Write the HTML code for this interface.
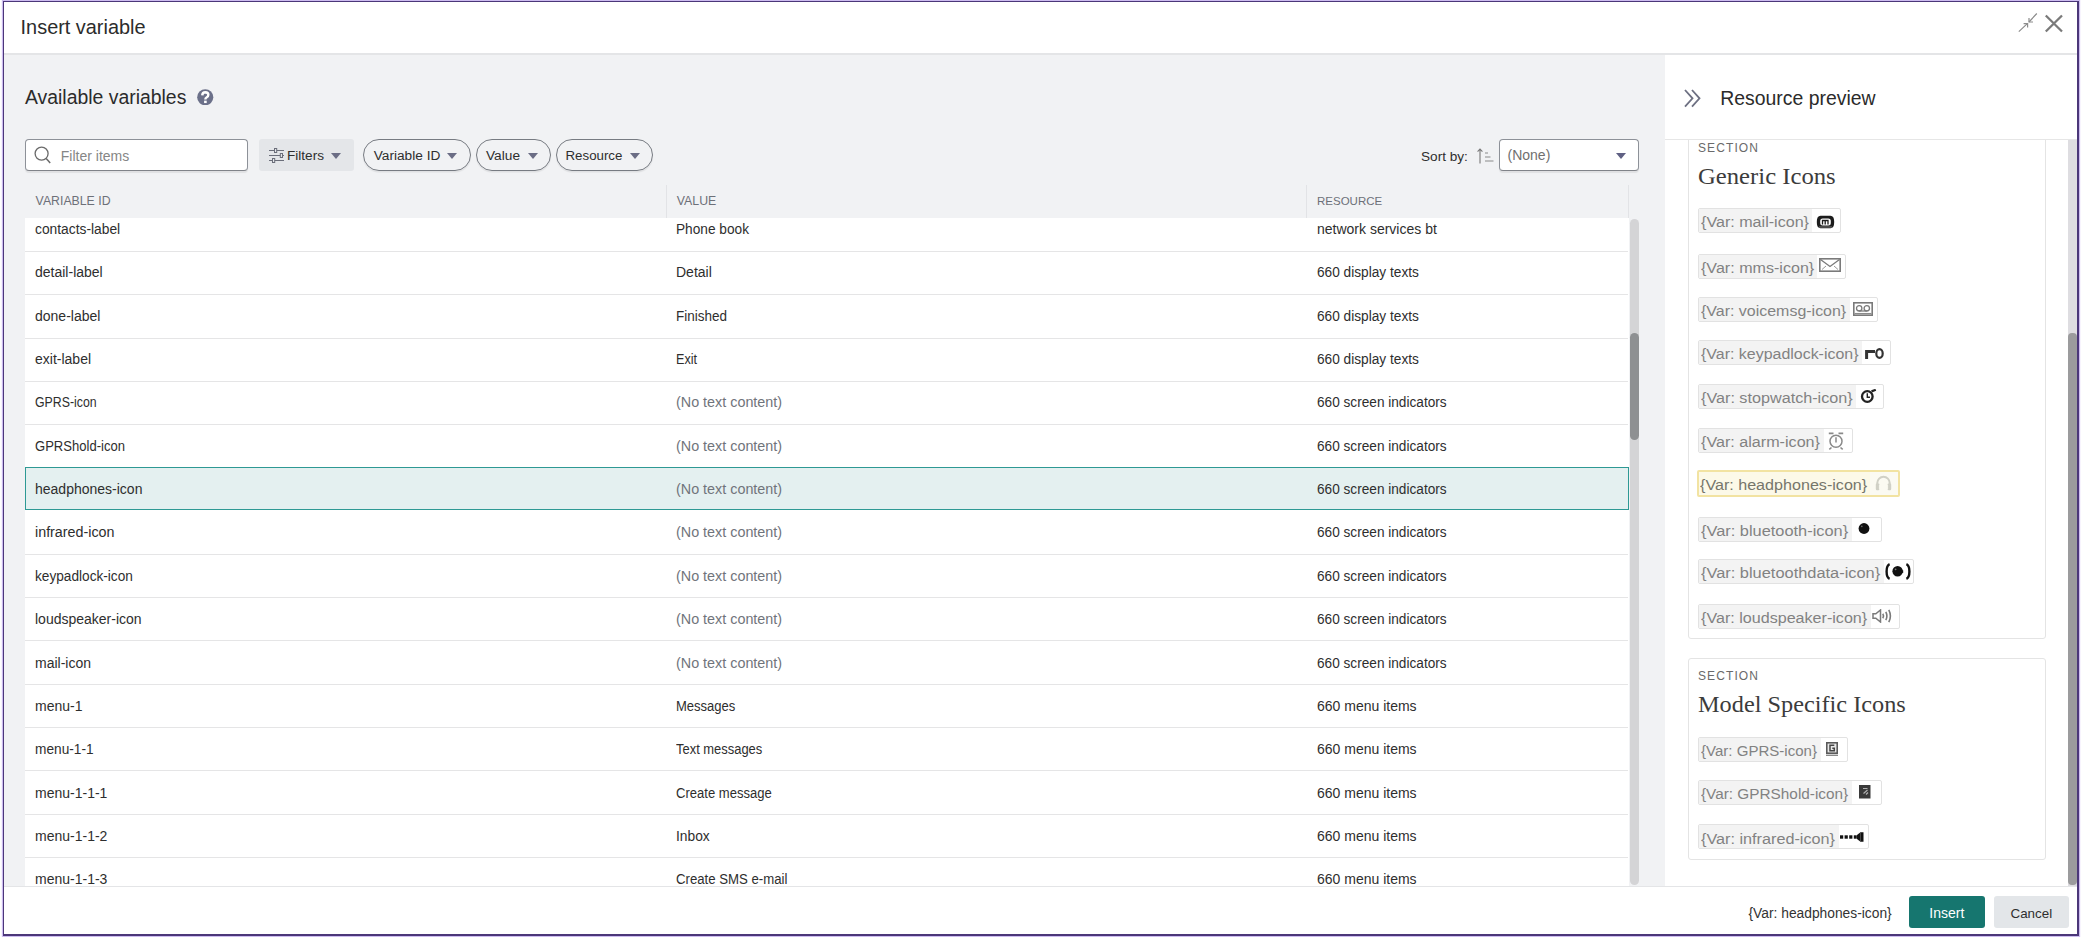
<!DOCTYPE html>
<html><head><meta charset="utf-8">
<style>
*{box-sizing:border-box;margin:0;padding:0}
html,body{width:2082px;height:937px;overflow:hidden;background:#fff;font-family:"Liberation Sans",sans-serif;color:#2b2b2b;position:relative}
.abs{position:absolute}
.txt{position:absolute;white-space:nowrap}
#frame{position:absolute;left:3px;top:1px;width:2076px;height:935px;border-style:solid;border-color:#4b3779;border-width:1.4px 2px 2px 1.4px;box-shadow:0 0 1px 1px #cdbcf0;z-index:50;pointer-events:none}
#hdrline{position:absolute;left:4px;top:53px;width:2073px;height:2px;background:#e4e5e7}
#left{position:absolute;left:4px;top:55px;width:1661px;height:831px;background:#f1f2f4}
#right{position:absolute;left:1665px;top:55px;width:412px;height:831px;background:#fff}
#foot{position:absolute;left:4px;top:886px;width:2073px;height:48px;background:#fff;border-top:1px solid #e4e5e7}
#tbody{position:absolute;left:25px;top:218px;width:1604px;height:668px;overflow:hidden;background:#fff}
.row{position:absolute;left:0;width:1603px;height:43.27px;background:#fff;border-bottom:1px solid #e5e5e6;font-size:14px;color:#2e2e2e}
.row span{position:absolute;top:12.5px;line-height:17px;white-space:nowrap;transform-origin:0 0}
.row .c1{left:10px}
.row .c2{left:651px}
.row .c3{left:1292px}
.row .g{color:#70747b}
.row.sel{background:#e4f0f0;border:1px solid #2e9994;z-index:2;width:1604px}
.row.sel span{top:12.1px}
.row.sel .c1{left:9px}.row.sel .c2{left:650px}.row.sel .c3{left:1291px}
.chip{position:absolute;border:1px solid #e2e2e2;border-radius:2px;background:#fff;overflow:hidden}
.chip .cbg{position:absolute;left:0;top:0;bottom:0;background:#f3f3f3}
.chip .ct{position:absolute;left:2px;font-size:15.5px;line-height:20px;color:#828282;white-space:nowrap;transform-origin:0 0}
.chip.hl{border:2px solid #f2e3a2;margin-left:-1px;background:#fbfaf2}
.chip.hl .cbg{background:#fcf9e8}
.chip.hl .ct{color:#76766b;left:1px}
.sec{position:absolute;left:1688px;width:358px;border:1px solid #e4e4e4;border-radius:3px;background:#fff}
.lab{position:absolute;font-size:12px;letter-spacing:1.1px;color:#6a6a6a;white-space:nowrap;line-height:15px}
.h{position:absolute;font-family:"Liberation Serif",serif;font-size:24.3px;line-height:28px;color:#3c3c3c;white-space:nowrap}
.pill{position:absolute;top:139px;height:32px;border:1px solid #777b82;border-radius:16px;box-shadow:0 1.5px 1px rgba(0,0,0,0.07)}
.tri{position:absolute;width:0;height:0;border-left:5.7px solid transparent;border-right:5.7px solid transparent;border-top:6.4px solid #6b6d85;margin-top:0.3px}
.t14{font-size:14px;line-height:17px;color:#2e2e2e}
</style></head>
<body>
<div id="frame"></div>
<!-- header -->
<div class="txt" style="left:20.6px;top:15.1px;font-size:19.9px;line-height:24px;color:#2c2c2c">Insert variable</div>
<svg class="abs" style="left:2018px;top:13px" width="20" height="20" viewBox="0 0 20 20"><path d="M0.8 18.6 L9.6 10.4 M18.8 0.5 L11 9" stroke="#8c8c8c" stroke-width="1.2" fill="none"/><path d="M5.6 10.6 H9.6 V14.4 M15 9 H11 V5" stroke="#8c8c8c" stroke-width="1.2" fill="none"/></svg>
<svg class="abs" style="left:2044px;top:13.5px" width="20" height="19" viewBox="0 0 20 19"><path d="M1.8 1.5 L18 17.5 M18 1.5 L1.8 17.5" stroke="#7a7a7a" stroke-width="2.3" fill="none"/></svg>
<div id="hdrline"></div>
<div id="left"></div>
<div id="right"></div>

<div class="txt" style="left:25px;top:85px;font-size:19.4px;line-height:24px;color:#2b2b2b">Available variables</div>
<svg class="abs" style="left:197px;top:88.6px" width="16.5" height="16.5" viewBox="0 0 17 17"><circle cx="8.5" cy="8.5" r="8.3" fill="#6b7089"/><path d="M5.4 6.6 Q5.5 3.3 8.6 3.3 Q11.7 3.4 11.7 6 Q11.7 7.8 9.8 8.8 Q8.6 9.4 8.6 10.8" stroke="#fff" stroke-width="2.5" fill="none"/><rect x="7.3" y="12" width="2.7" height="2.5" fill="#fff"/></svg>
<!-- search -->
<div class="abs" style="left:25px;top:139px;width:223px;height:32px;background:#fff;border:1px solid #8d9198;border-bottom-color:#808389;border-radius:4px;box-shadow:0 1.5px 1px rgba(0,0,0,0.07)"></div>
<svg class="abs" style="left:34px;top:146px" width="17" height="18" viewBox="0 0 17 18"><circle cx="7.6" cy="7.6" r="6.5" fill="none" stroke="#6a6a6a" stroke-width="1.3"/><path d="M12.2 12.5 L16.2 17" stroke="#6a6a6a" stroke-width="1.5"/></svg>
<div class="txt t14" style="left:60.8px;top:148px;color:#868686">Filter items</div>
<!-- filters btn -->
<div class="abs" style="left:259px;top:139px;width:95px;height:32px;background:#e4e6e9;border-radius:3px"></div>
<svg class="abs" style="left:269px;top:148px" width="15" height="16" viewBox="0 0 15 16"><path d="M0 2.5 H15 M0 7.5 H15 M0 12.5 H15" stroke="#6b6e7a" stroke-width="1"/><rect x="5.5" y="0.5" width="2.2" height="4" fill="#e4e6e9" stroke="#6b6e7a" stroke-width="1"/><rect x="11.3" y="5.5" width="2.2" height="4" fill="#e4e6e9" stroke="#6b6e7a" stroke-width="1"/><rect x="3.5" y="10.5" width="2.2" height="4" fill="#e4e6e9" stroke="#6b6e7a" stroke-width="1"/></svg>
<div class="txt t14" style="left:287px;top:147px;font-size:13.6px">Filters</div>
<div class="tri" style="left:331px;top:152.3px"></div>
<!-- pills -->
<div class="pill" style="left:363px;width:108px"></div>
<div class="txt t14" style="left:373.7px;top:147px;font-size:13.7px">Variable ID</div>
<div class="tri" style="left:447px;top:152.3px"></div>
<div class="pill" style="left:476px;width:75px"></div>
<div class="txt t14" style="left:486px;top:147px;font-size:13.7px">Value</div>
<div class="tri" style="left:527.5px;top:152.3px"></div>
<div class="pill" style="left:556px;width:97px"></div>
<div class="txt t14" style="left:565.5px;top:147px;font-size:13.3px">Resource</div>
<div class="tri" style="left:629.5px;top:152.3px"></div>
<!-- sort -->
<div class="txt t14" style="left:1421px;top:147.5px;font-size:13.6px">Sort by:</div>
<svg class="abs" style="left:1477px;top:148px" width="17" height="16" viewBox="0 0 17 16"><path d="M3 15.5 V1.2 M0.6 3.6 L3 1 L5.4 3.6" stroke="#777" stroke-width="1.1" fill="none"/><path d="M8 5 H11 M8 9 H13.5 M8 13 H16.5" stroke="#8a8a8a" stroke-width="1.1"/></svg>
<div class="abs" style="left:1499px;top:139px;width:140px;height:32px;background:#fff;border:1px solid #8d9198;border-bottom-color:#808389;border-radius:4px;box-shadow:0 1.5px 1px rgba(0,0,0,0.07)"></div>
<div class="txt t14" style="left:1507.5px;top:147px;color:#707070">(None)</div>
<div class="tri" style="left:1615.5px;top:152.5px;border-top-color:#5f6083"></div>
<!-- table header -->
<div class="txt" style="left:35.6px;top:193.6px;font-size:12.3px;line-height:15px;color:#6d7078">VARIABLE ID</div>
<div class="txt" style="left:676.8px;top:193.6px;font-size:12.3px;line-height:15px;color:#6d7078">VALUE</div>
<div class="txt" style="left:1317px;top:193.6px;font-size:11.5px;line-height:15px;color:#6d7078">RESOURCE</div>
<div class="abs" style="left:666px;top:185px;width:1px;height:33px;background:#e2e3e6"></div>
<div class="abs" style="left:1306px;top:185px;width:1px;height:33px;background:#e2e3e6"></div>
<div class="abs" style="left:1628px;top:185px;width:1px;height:33px;background:#e2e3e6"></div>
<div id="tbody">
<div class="row" style="top:-9.20px"><span class="c1" style="top:12.00px;transform:scaleX(0.986)">contacts-label</span><span class="c2" style="top:12.00px;transform:scaleX(0.977)">Phone book</span><span class="c3" style="top:12.00px">network services bt</span></div>
<div class="row" style="top:34.07px"><span class="c1" style="top:12.11px">detail-label</span><span class="c2" style="top:12.11px">Detail</span><span class="c3" style="top:12.11px;transform:scaleX(0.977)">660 display texts</span></div>
<div class="row" style="top:77.34px"><span class="c1" style="top:12.21px">done-label</span><span class="c2" style="top:12.21px;transform:scaleX(0.963)">Finished</span><span class="c3" style="top:12.21px;transform:scaleX(0.977)">660 display texts</span></div>
<div class="row" style="top:120.61px"><span class="c1" style="top:12.32px">exit-label</span><span class="c2" style="top:12.32px;transform:scaleX(0.900)">Exit</span><span class="c3" style="top:12.32px;transform:scaleX(0.977)">660 display texts</span></div>
<div class="row" style="top:163.88px"><span class="c1" style="top:12.43px;transform:scaleX(0.880)">GPRS-icon</span><span class="c2 g" style="top:12.43px;transform:scaleX(1.025)">(No text content)</span><span class="c3" style="top:12.43px;transform:scaleX(0.974)">660 screen indicators</span></div>
<div class="row" style="top:207.15px"><span class="c1" style="top:12.54px;transform:scaleX(0.932)">GPRShold-icon</span><span class="c2 g" style="top:12.54px;transform:scaleX(1.025)">(No text content)</span><span class="c3" style="top:12.54px;transform:scaleX(0.974)">660 screen indicators</span></div>
<div class="row sel" style="top:249px;height:43px"><span class="c1" style="top:13.04px">headphones-icon</span><span class="c2 g" style="top:13.04px;transform:scaleX(1.025)">(No text content)</span><span class="c3" style="top:13.04px;transform:scaleX(0.974)">660 screen indicators</span></div>
<div class="row" style="top:293.69px"><span class="c1" style="top:12.75px;transform:scaleX(1.021)">infrared-icon</span><span class="c2 g" style="top:12.75px;transform:scaleX(1.025)">(No text content)</span><span class="c3" style="top:12.75px;transform:scaleX(0.974)">660 screen indicators</span></div>
<div class="row" style="top:336.96px"><span class="c1" style="top:12.86px;transform:scaleX(0.975)">keypadlock-icon</span><span class="c2 g" style="top:12.86px;transform:scaleX(1.025)">(No text content)</span><span class="c3" style="top:12.86px;transform:scaleX(0.974)">660 screen indicators</span></div>
<div class="row" style="top:380.23px"><span class="c1" style="top:12.96px">loudspeaker-icon</span><span class="c2 g" style="top:12.96px;transform:scaleX(1.025)">(No text content)</span><span class="c3" style="top:12.96px;transform:scaleX(0.974)">660 screen indicators</span></div>
<div class="row" style="top:423.50px"><span class="c1" style="top:13.07px">mail-icon</span><span class="c2 g" style="top:13.07px;transform:scaleX(1.025)">(No text content)</span><span class="c3" style="top:13.07px;transform:scaleX(0.974)">660 screen indicators</span></div>
<div class="row" style="top:466.77px"><span class="c1" style="top:13.18px">menu-1</span><span class="c2" style="top:13.18px;transform:scaleX(0.930)">Messages</span><span class="c3" style="top:13.18px">660 menu items</span></div>
<div class="row" style="top:510.04px"><span class="c1" style="top:13.28px;transform:scaleX(0.978)">menu-1-1</span><span class="c2" style="top:13.28px;transform:scaleX(0.924)">Text messages</span><span class="c3" style="top:13.28px">660 menu items</span></div>
<div class="row" style="top:553.31px"><span class="c1" style="top:13.39px">menu-1-1-1</span><span class="c2" style="top:13.39px;transform:scaleX(0.932)">Create message</span><span class="c3" style="top:13.39px">660 menu items</span></div>
<div class="row" style="top:596.58px"><span class="c1" style="top:13.50px">menu-1-1-2</span><span class="c2" style="top:13.50px;transform:scaleX(0.985)">Inbox</span><span class="c3" style="top:13.50px">660 menu items</span></div>
<div class="row" style="top:639.85px"><span class="c1" style="top:13.61px">menu-1-1-3</span><span class="c2" style="top:13.61px;transform:scaleX(0.942)">Create SMS e-mail</span><span class="c3" style="top:13.61px">660 menu items</span></div>
</div>
<!-- table scrollbar -->
<div class="abs" style="left:1630px;top:219px;width:9px;height:666px;background:#d4d4d6;border-radius:4.5px"></div>
<div class="abs" style="left:1630px;top:333px;width:9px;height:107px;background:#8e9092;border-radius:4.5px"></div>
<!-- right panel -->
<svg class="abs" style="left:1683.8px;top:89px" width="18" height="19" viewBox="0 0 18 19"><path d="M1 1 L8.5 9.3 L1 17.6 M8 1 L15.5 9.3 L8 17.6" stroke="#6d7082" stroke-width="1.8" fill="none"/></svg>
<div class="txt" style="left:1720.3px;top:85.5px;font-size:19.4px;line-height:24px;color:#2b2b2b">Resource preview</div>
<div class="abs" style="left:1665px;top:139px;width:413px;height:1px;background:#e6e6e6"></div>
<div class="abs" style="left:1665px;top:140px;width:402px;height:746px;overflow:hidden">
  <div class="sec" style="left:23px;top:-20px;height:519px"></div>
  <div class="sec" style="left:23px;top:518px;height:202px"></div>
  <div class="lab" style="left:33px;top:1px">SECTION</div>
  <div class="h" style="left:33px;top:23.3px;font-size:22.2px;transform:scaleX(1.112);transform-origin:0 0">Generic Icons</div>
  <div class="lab" style="left:33px;top:529px">SECTION</div>
  <div class="h" style="left:33px;top:550.7px;font-size:22.2px;transform:scaleX(1.095);transform-origin:0 0">Model Specific Icons</div>
</div>
<div class="abs" style="left:2068px;top:140px;width:8.5px;height:746px;background:#dedde1"></div>
<div class="abs" style="left:2068px;top:333px;width:8.5px;height:552px;background:#9b9b9d;border-radius:4px 4px 4px 4px"></div>
<div class="chip" style="left:1698px;top:208.3px;width:143.4px;height:25px"><div class="cbg" style="width:113.0px"></div><div class="ct" style="top:3.15px;transform:scaleX(1.0389)">{Var: mail-icon}</div></div><div class="abs" style="left:1815.5px;top:214.8px;line-height:0"><svg width="19" height="14" viewBox="0 0 19 14"><path d="M4.5 0.8 H14.5 Q18.2 0.8 18.2 7 Q18.2 13.2 14.5 13.2 H4.5 Q0.8 13.2 0.8 7 Q0.8 0.8 4.5 0.8 Z" fill="#1c1c1c"/><rect x="4.2" y="3.6" width="10.6" height="6.8" rx="2.5" fill="#fff"/><path d="M6.5 9.5 V5.5 H12 V9.5 M9.2 5.5 V9.5" stroke="#1c1c1c" stroke-width="1.3" fill="none"/><path d="M3 12 H16" stroke="#777" stroke-width="1"/></svg></div>
<div class="chip" style="left:1698px;top:253.6px;width:148.3px;height:25px"><div class="cbg" style="width:118.0px"></div><div class="ct" style="top:3.15px;transform:scaleX(1.0375)">{Var: mms-icon}</div></div><div class="abs" style="left:1819.3px;top:258.3px;line-height:0"><svg width="22" height="14" viewBox="0 0 22 14"><rect x="0.8" y="0.8" width="20.4" height="12.4" fill="none" stroke="#7a7a7a" stroke-width="1.6"/><path d="M1.5 1.5 L11 8.5 L20.5 1.5" fill="none" stroke="#7a7a7a" stroke-width="1.3"/><path d="M3 11.5 L7 8 M19 11.5 L15 8" stroke="#999" stroke-width="1"/></svg></div>
<div class="chip" style="left:1698px;top:296.6px;width:180.4px;height:25px"><div class="cbg" style="width:151.0px"></div><div class="ct" style="top:3.15px;transform:scaleX(1.0298)">{Var: voicemsg-icon}</div></div><div class="abs" style="left:1852.6px;top:302px;line-height:0"><svg width="20" height="14" viewBox="0 0 20 14"><rect x="0.8" y="0.8" width="18.4" height="12.4" fill="none" stroke="#7a7a7a" stroke-width="1.6"/><circle cx="6.2" cy="6.3" r="2.7" fill="none" stroke="#7a7a7a" stroke-width="1.3"/><circle cx="13.8" cy="6.3" r="2.7" fill="none" stroke="#7a7a7a" stroke-width="1.3"/><path d="M6.2 9 H13.8" stroke="#7a7a7a" stroke-width="1.3"/><path d="M1.5 11.6 H18.5" stroke="#8a8a8a" stroke-width="1.3"/></svg></div>
<div class="chip" style="left:1698px;top:340.2px;width:192.7px;height:25px"><div class="cbg" style="width:163.0px"></div><div class="ct" style="top:3.15px;transform:scaleX(1.0289)">{Var: keypadlock-icon}</div></div><div class="abs" style="left:1865.3px;top:348.4px;line-height:0"><svg width="19" height="11" viewBox="0 0 19 11"><path d="M1.6 11 V3.6 H10" fill="none" stroke="#333" stroke-width="3"/><ellipse cx="14.5" cy="5.5" rx="3.2" ry="4.4" fill="none" stroke="#333" stroke-width="2.2"/></svg></div>
<div class="chip" style="left:1698px;top:384.1px;width:186.3px;height:25px"><div class="cbg" style="width:157.0px"></div><div class="ct" style="top:3.15px;transform:scaleX(1.0438)">{Var: stopwatch-icon}</div></div><div class="abs" style="left:1860.2px;top:389.3px;line-height:0"><svg width="17" height="14" viewBox="0 0 17 14"><circle cx="7.3" cy="7.5" r="5.3" fill="none" stroke="#222" stroke-width="2.3"/><path d="M7.3 4.3 V8.2 H10" fill="none" stroke="#222" stroke-width="1.4"/><path d="M11.5 2.4 L15.8 0.8" stroke="#222" stroke-width="2.2"/></svg></div>
<div class="chip" style="left:1698px;top:428.3px;width:154.6px;height:25px"><div class="cbg" style="width:125.0px"></div><div class="ct" style="top:3.15px;transform:scaleX(1.0411)">{Var: alarm-icon}</div></div><div class="abs" style="left:1827.9px;top:431.5px;line-height:0"><svg width="16" height="18" viewBox="0 0 16 18"><circle cx="8" cy="9.3" r="6" fill="none" stroke="#8a8a8a" stroke-width="1.5"/><path d="M8 5.2 V10.5" stroke="#8a8a8a" stroke-width="1.5"/><path d="M0.8 1.3 H5.5 M10.5 1.3 H15.2" stroke="#8a8a8a" stroke-width="1.8"/><path d="M3.5 15.5 L1.3 17.3 M12.5 15.5 L14.7 17.3" stroke="#8a8a8a" stroke-width="1.6"/></svg></div>
<div class="chip hl" style="left:1698px;top:470.3px;width:203.3px;height:26.5px"><div class="cbg" style="width:171.0px"></div><div class="ct" style="top:3.15px;transform:scaleX(1.0393)">{Var: headphones-icon}</div></div><div class="abs" style="left:1874.5px;top:475.3px;line-height:0"><svg width="17" height="16" viewBox="0 0 17 16"><path d="M2.3 10.5 V8 A6.2 6.2 0 0 1 14.7 8 V10.5" fill="none" stroke="#d0d0c6" stroke-width="2"/><rect x="0.8" y="8.6" width="3.6" height="6.6" rx="1.2" fill="#d0d0c6"/><rect x="12.6" y="8.6" width="3.6" height="6.6" rx="1.2" fill="#d0d0c6"/><path d="M4.4 10 V14 M12.6 10 V14" stroke="#fbfaf2" stroke-width="0.8"/></svg></div>
<div class="chip" style="left:1698px;top:516.5px;width:183.5px;height:25px"><div class="cbg" style="width:153.0px"></div><div class="ct" style="top:3.15px;transform:scaleX(1.0566)">{Var: bluetooth-icon}</div></div><div class="abs" style="left:1858px;top:522.5px;line-height:0"><svg width="12" height="11" viewBox="0 0 12 11"><circle cx="6" cy="5.5" r="5.4" fill="#111"/><circle cx="3.8" cy="3.3" r="0.9" fill="#666"/></svg></div>
<div class="chip" style="left:1698px;top:559.1px;width:216.0px;height:25px"><div class="cbg" style="width:185.0px"></div><div class="ct" style="top:3.15px;transform:scaleX(1.0573)">{Var: bluetoothdata-icon}</div></div><div class="abs" style="left:1884.5px;top:563px;line-height:0"><svg width="26" height="17" viewBox="0 0 26 17"><path d="M4.6 1.2 Q1.6 2.5 1.6 8.5 Q1.6 14.5 4.6 15.8" fill="none" stroke="#111" stroke-width="2.4"/><path d="M21.4 1.2 Q24.4 2.5 24.4 8.5 Q24.4 14.5 21.4 15.8" fill="none" stroke="#111" stroke-width="2.4"/><circle cx="12.6" cy="8.3" r="5.2" fill="#111"/><path d="M15 8.6 H18.2" stroke="#111" stroke-width="2.6"/><circle cx="10.6" cy="6.3" r="0.9" fill="#777"/></svg></div>
<div class="chip" style="left:1698px;top:604.3px;width:201.5px;height:25px"><div class="cbg" style="width:172.0px"></div><div class="ct" style="top:3.15px;transform:scaleX(1.0389)">{Var: loudspeaker-icon}</div></div><div class="abs" style="left:1872.3px;top:609px;line-height:0"><svg width="21" height="14" viewBox="0 0 21 14"><path d="M1 4.8 H3.8 L8.5 1 V13 L3.8 9.2 H1 Z" fill="none" stroke="#7a7a7a" stroke-width="1.5"/><path d="M10.8 4.8 Q12.2 7 10.8 9.2" fill="none" stroke="#7a7a7a" stroke-width="1.6"/><path d="M13.8 2.8 Q16 7 13.8 11.2" fill="none" stroke="#7a7a7a" stroke-width="1.6"/><path d="M16.8 0.8 Q20 7 16.8 13.2" fill="none" stroke="#7a7a7a" stroke-width="1.6"/></svg></div>
<div class="chip" style="left:1698px;top:737.3px;width:150.1px;height:25px"><div class="cbg" style="width:122.0px"></div><div class="ct" style="top:3.15px;transform:scaleX(0.9710)">{Var: GPRS-icon}</div></div><div class="abs" style="left:1825.6px;top:742.2px;line-height:0"><svg width="12" height="14" viewBox="0 0 12 14"><rect x="0" y="0" width="12" height="12" fill="#5a5a5a"/><rect x="1.6" y="1.6" width="8.8" height="8.8" fill="#e8e8e8"/><path d="M8.3 3.3 H4 V8.7 H8.3 V6.3 H6.3" fill="none" stroke="#444" stroke-width="1.5"/><path d="M0 13.3 H12" stroke="#888" stroke-width="1.4"/></svg></div>
<div class="chip" style="left:1698px;top:780.3px;width:183.5px;height:25px"><div class="cbg" style="width:153.0px"></div><div class="ct" style="top:3.15px;transform:scaleX(0.9895)">{Var: GPRShold-icon}</div></div><div class="abs" style="left:1859px;top:784.8px;line-height:0"><svg width="12" height="14" viewBox="0 0 12 14"><rect x="0" y="0" width="11.5" height="13.5" fill="#3a3a3a"/><path d="M4 3.5 H8.5 M4.5 8.5 L8.5 5 M7 9.5 L9 7.5" stroke="#b0b0b0" stroke-width="1.2"/></svg></div>
<div class="chip" style="left:1698px;top:824.4px;width:170.5px;height:25px"><div class="cbg" style="width:140.0px"></div><div class="ct" style="top:3.15px;transform:scaleX(1.0462)">{Var: infrared-icon}</div></div><div class="abs" style="left:1839.6px;top:831.1px;line-height:0"><svg width="25" height="12" viewBox="0 0 25 12"><rect x="0" y="4.3" width="3.2" height="3.4" fill="#111"/><rect x="4.6" y="4.3" width="3.2" height="3.4" fill="#111"/><rect x="9.2" y="4.3" width="3.2" height="3.4" fill="#111"/><rect x="13.8" y="4.3" width="3" height="3.4" fill="#111"/><path d="M17 4 L20.5 1.2 H23.5 V10.8 H20.5 L17 8 Z" fill="#111"/><path d="M20.5 1.5 V10.5" stroke="#555" stroke-width="0.8"/></svg></div>
<div id="foot"></div>
<div class="txt t14" style="left:1748.5px;top:904.5px;font-size:13.8px;color:#333">{Var: headphones-icon}</div>
<div class="abs" style="left:1909px;top:896px;width:76px;height:32px;background:#16766f;border-radius:3px"></div>
<div class="txt t14" style="left:1929.3px;top:904.7px;color:#fff">Insert</div>
<div class="abs" style="left:1994px;top:896px;width:75px;height:32px;background:#e3e6e9;border-radius:3px"></div>
<div class="txt t14" style="left:2010.5px;top:904.7px;font-size:13.4px">Cancel</div>
</body></html>
